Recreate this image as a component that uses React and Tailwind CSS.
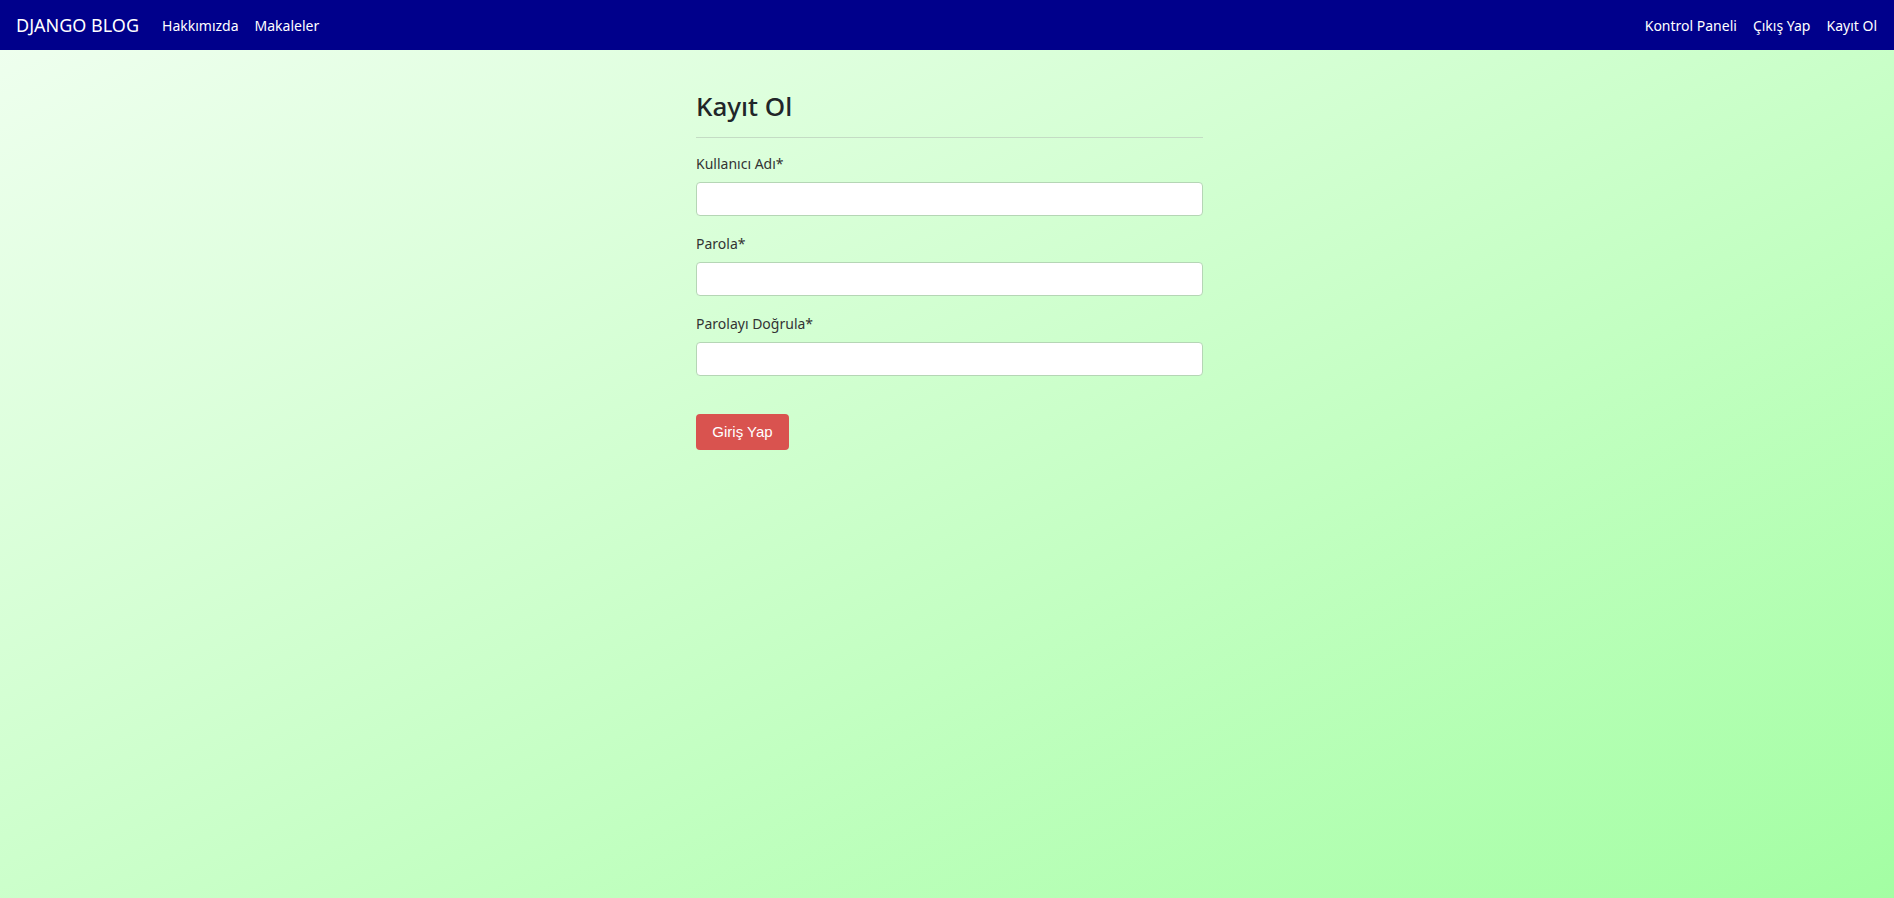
const fields = [
  { label: "Kullanıcı Adı*", type: "text" },
  { label: "Parola*", type: "password" },
  { label: "Parolayı Doğrula*", type: "password" },
];

export default function App() {
  return (
    <div
      className="min-h-[898px] bg-gradient-to-br from-[#f0fff0] to-[#a3fea3] text-[#212529]"
      style={{ fontFamily: '"Noto Sans", sans-serif' }}
    >
      <nav className="flex h-[50px] items-center justify-between bg-[#00008b] pl-4 pr-[17px] text-white">
        <div className="flex items-center">
          <a href="#" className="text-[18px] leading-none">
            DJANGO BLOG
          </a>
          <div className="ml-[23px] flex items-center gap-4 text-[14px]">
            <a href="#">Hakkımızda</a>
            <a href="#">Makaleler</a>
          </div>
        </div>
        <div className="flex items-center gap-4 text-[14px]">
          <a href="#">Kontrol Paneli</a>
          <a href="#">Çıkış Yap</a>
          <a href="#">Kayıt Ol</a>
        </div>
      </nav>

      <div className="flex justify-center pl-[5px]">
        <form className="mt-[41px] w-[507px]">
          <h3 className="text-[26px] font-medium leading-[31px]">Kayıt Ol</h3>
          <hr className="mt-[15px] border-[#c4dcc4]" />
          <div className="mt-[14px]">
            {fields.map((f) => (
              <div key={f.label} className="mb-4">
                <label className="block text-[14px] leading-[24px] text-[#333]">{f.label}</label>
                <input
                  type={f.type}
                  className="mt-[6px] block h-[34px] w-full rounded-[4px] border border-[#b5d6b5] bg-white px-3 focus:outline-none"
                />
              </div>
            ))}
          </div>
          <button
            type="button"
            className="mt-[22px] h-[36px] w-[93px] rounded-[4px] bg-[#d9534f] text-[15px] text-white"
            style={{ fontFamily: '"Liberation Sans", Arial, sans-serif' }}
          >
            Giriş Yap
          </button>
        </form>
      </div>
    </div>
  );
}
